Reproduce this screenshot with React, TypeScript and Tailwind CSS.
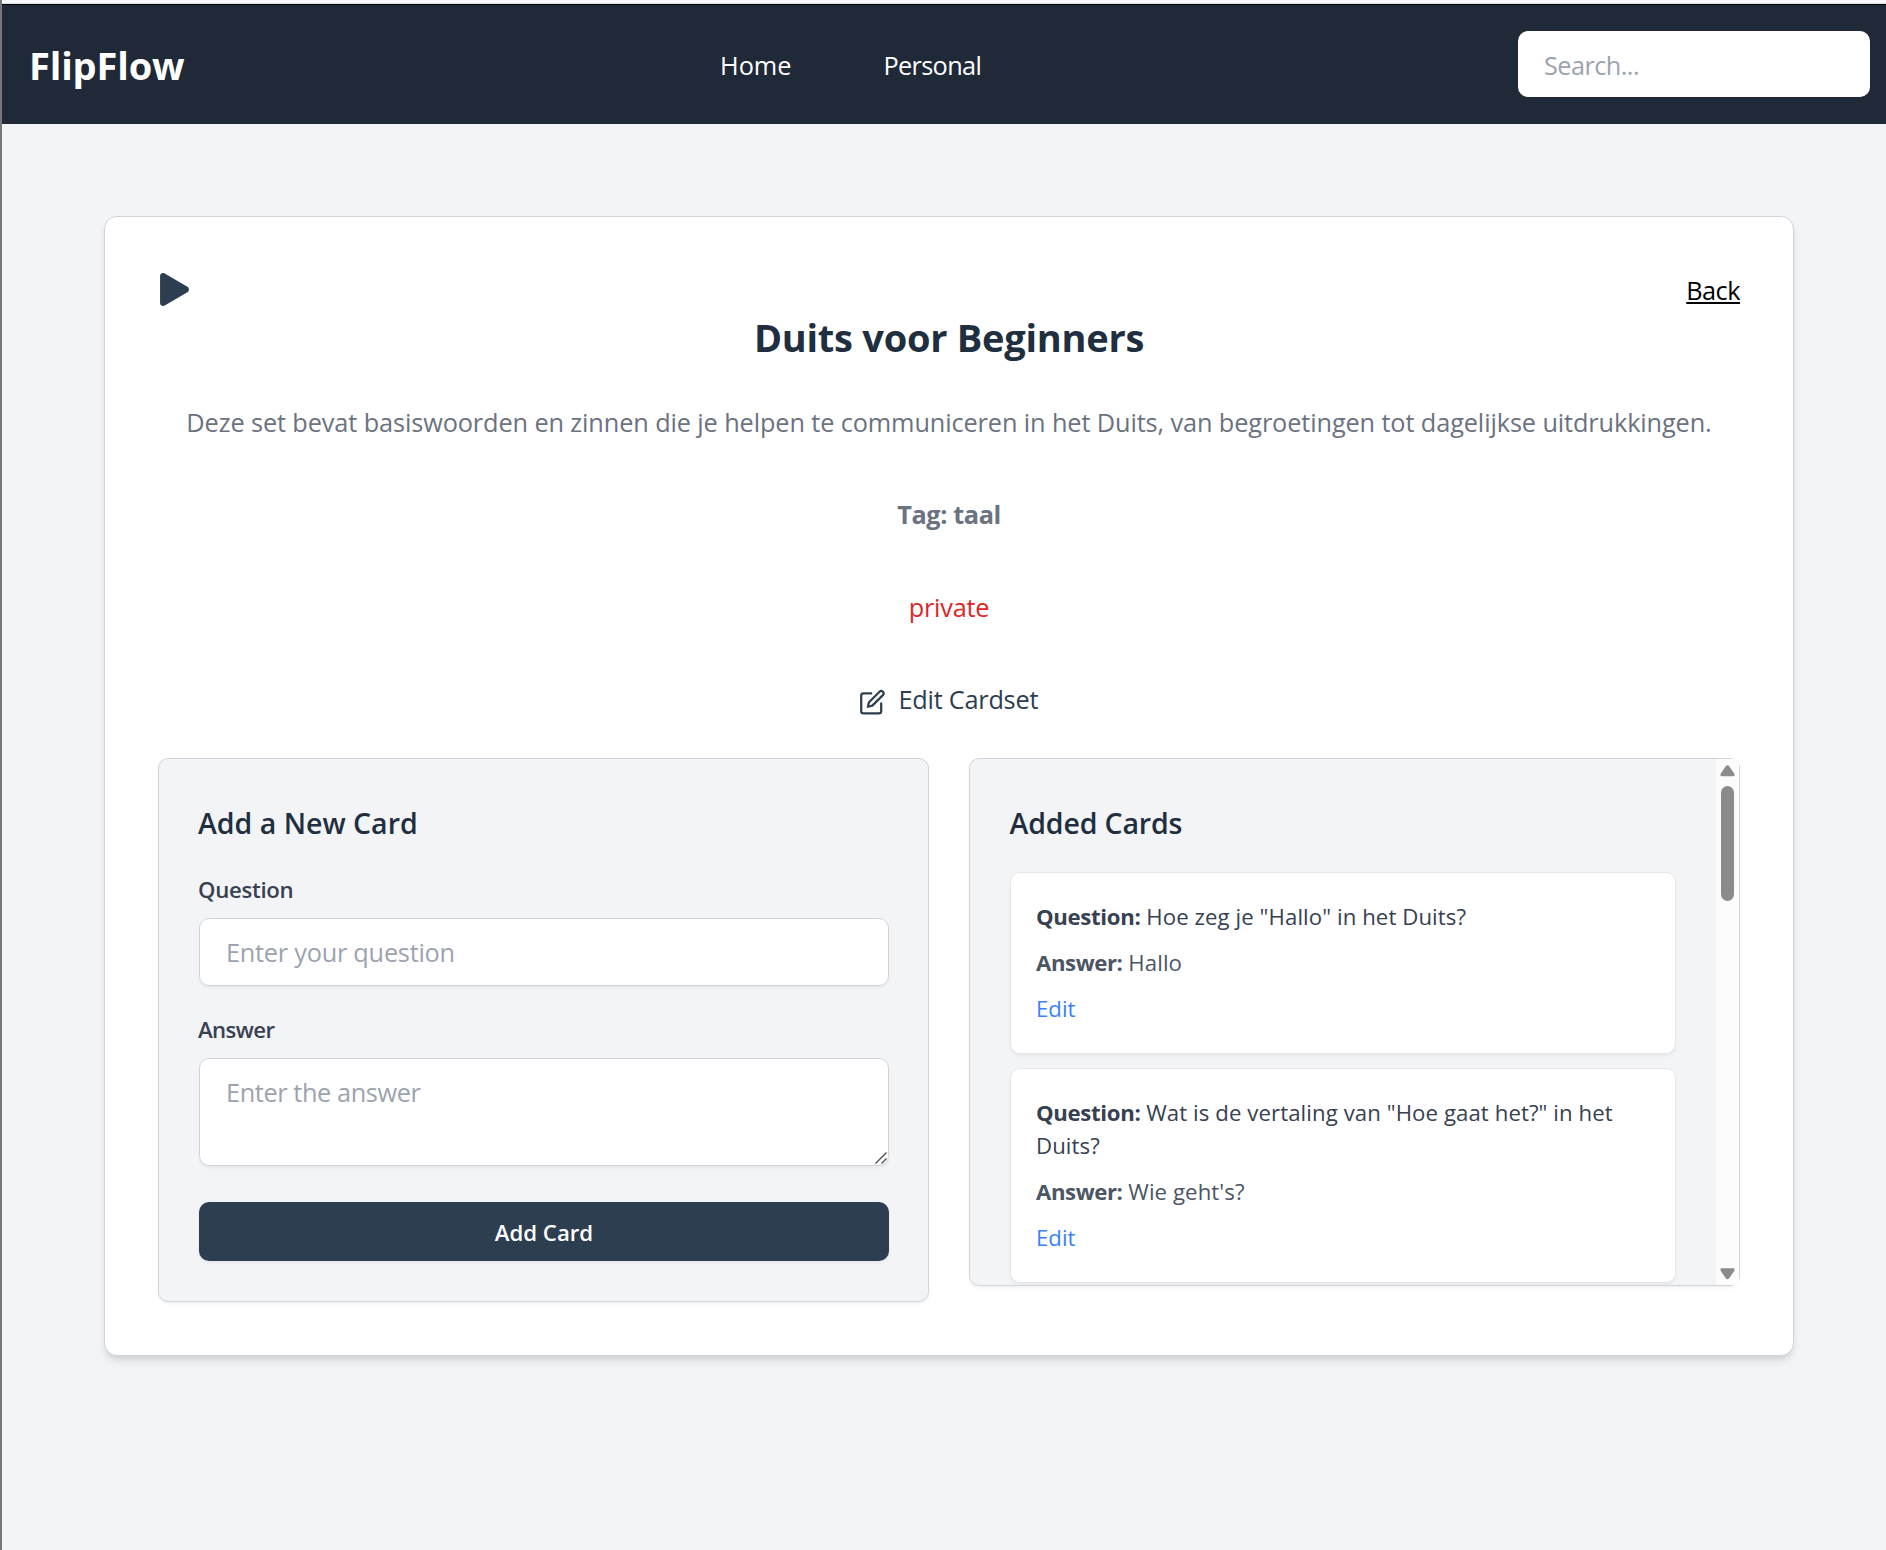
import React from "react";
import { FaPlay } from "react-icons/fa";
import { FiEdit } from "react-icons/fi";

type Card = { question: string; answer: string };

const cards: Card[] = [
  { question: 'Hoe zeg je "Hallo" in het Duits?', answer: "Hallo" },
  { question: 'Wat is de vertaling van "Hoe gaat het?" in het Duits?', answer: "Wie geht's?" },
];

function Header() {
  return (
    <header className="flex h-[119px] items-center bg-[#1f2937] pl-[27px] pr-4 text-white">
      <div className="w-[691px] text-[38px] font-bold leading-[54px] tracking-[-0.004em]">FlipFlow</div>
      <nav className="flex grow gap-[92px] text-[25.3px] leading-10">
        <a>Home</a>
        <a className="tracking-[-0.0266em]">Personal</a>
      </nav>
      <input
        className="mb-px h-[66px] w-[352px] rounded-[10px] bg-white pl-[26px] pt-px text-[25.3px] tracking-[-0.0222em] placeholder:text-[#9ca3af]"
        placeholder="Search..."
      />
    </header>
  );
}

function AddCardForm() {
  return (
    <section className="flex h-[544px] flex-col rounded-[10px] border border-[#d1d5db] bg-[#f3f4f6] py-10 pl-10 pr-[39px] shadow-[0_2px_3px_rgba(0,0,0,0.05)]">
      <h2 className="-ml-px h-12 text-[28.5px] font-semibold leading-[48px] text-[#1f2f40]">Add a New Card</h2>
      <label className="-ml-px mt-[26px] h-[34px] text-[22.2px] font-semibold leading-[34px] tracking-[-0.0131em] text-[#374151]">
        Question
      </label>
      <input
        className="mt-[11px] h-[68px] rounded-[10px] border border-[#d1d5db] bg-white px-[26px] text-[25.3px] tracking-[-0.0095em] shadow-[0_2px_3px_rgba(0,0,0,0.05)] placeholder:text-[#9ca3af]"
        placeholder="Enter your question"
      />
      <label className="-ml-px mt-[27px] h-[34px] text-[22.2px] font-semibold leading-[34px] tracking-[-0.026em] text-[#374151]">
        Answer
      </label>
      <div className="relative mt-[11px] h-[108px]">
        <textarea
          className="block h-full w-full resize-none rounded-[10px] border border-[#d1d5db] bg-white px-[26px] py-[13px] text-[25.3px] leading-10 tracking-[-0.0155em] shadow-[0_2px_3px_rgba(0,0,0,0.05)] placeholder:text-[#9ca3af]"
          placeholder="Enter the answer"
        />
        <svg className="absolute bottom-[2px] right-[2px]" width="12" height="12" viewBox="0 0 12 12" stroke="#4b4b4b" strokeWidth="1.3">
          <path d="M0.5 11.5 11.5 0.5M6.5 11.5 11.5 6.5" />
        </svg>
      </div>
      <button className="mt-9 h-[59px] rounded-[10px] bg-[#2c3e50] pt-[3px] text-[22.2px] font-semibold text-white shadow-[0_2px_3px_rgba(0,0,0,0.05)]">
        Add Card
      </button>
    </section>
  );
}

function CardItem({ question, answer }: Card) {
  return (
    <li className="rounded-[10px] border border-[#e5e7eb] bg-white pb-7 pl-[25.5px] pr-[26px] pt-[27px] text-[22.2px] leading-[33px] shadow-[0_2px_3px_rgba(0,0,0,0.05)]">
      <p className="tracking-[0.0037em] text-[#374151]">
        <strong className="tracking-[-0.015em]">Question:</strong> {question}
      </p>
      <p className="mt-[13px] tracking-[0.0037em] text-[#4b5563]">
        <strong className="tracking-[-0.019em]">Answer:</strong> {answer}
      </p>
      <a className="mt-[13px] block text-[#3b82f6]">Edit</a>
    </li>
  );
}

function ScrollBar() {
  return (
    <div className="flex w-[23px] shrink-0 flex-col items-center bg-[#fcfcfc] pb-[5px] pt-[6px]">
      <svg width="15" height="12" viewBox="0 0 15 12" fill="#8b8b8b">
        <path d="M5.8 1.3Q7.5-.7 9.2 1.3L14.2 8.6Q15.4 11.3 13 11.3H2Q-.4 11.3.8 8.6Z" />
      </svg>
      <div className="mt-[9px] h-[115px] w-[13px] rounded-full bg-[#8b8b8b]" />
      <svg className="mt-auto" width="15" height="12" viewBox="0 0 15 12" fill="#8b8b8b">
        <path d="M5.8 10.2Q7.5 12.2 9.2 10.2L14.2 2.9Q15.4 .2 13 .2H2Q-.4 .2.8 2.9Z" />
      </svg>
    </div>
  );
}

function AddedCards() {
  return (
    <section className="flex h-[528px] rounded-[10px] border border-[#d1d5db] bg-[#f3f4f6] shadow-[0_2px_3px_rgba(0,0,0,0.05)]">
      <div className="grow overflow-hidden pl-[39.5px] pr-10 pt-10">
        <h2 className="h-12 text-[28.5px] font-semibold leading-[48px] tracking-[-0.005em] text-[#1f2f40]">Added Cards</h2>
        <ul className="mt-[25px] flex flex-col gap-[14px]">
          {cards.map((card) => (
            <CardItem key={card.question} {...card} />
          ))}
        </ul>
      </div>
      <ScrollBar />
    </section>
  );
}

export default function App() {
  return (
    <div className="h-[1550px] overflow-hidden border-l-2 border-[#777777] bg-[#f3f4f6] font-['Open_Sans','Noto_Sans',sans-serif]">
      <div className="h-[5px] border-b border-black bg-[#f7f7fc]">
        <div className="h-1 border-b border-[#dedee6]" />
      </div>
      <Header />
      <main className="ml-[102px] mt-[92px] h-[1140px] w-[1690px] rounded-[13px] border border-[#d1d5db] bg-white p-[53px] shadow-[0_7px_10px_-2px_rgba(0,0,0,0.1),0_3px_7px_-3px_rgba(0,0,0,0.1)]">
        <div className="flex h-10 items-start justify-between">
          <FaPlay className="ml-[2px] mt-[3px] h-[33px] w-[29px] text-[#2c3e50]" />
          <a className="text-[25.3px] leading-10 tracking-[-0.0206em] text-black underline decoration-2 underline-offset-[2px]">Back</a>
        </div>
        <div className="flex flex-col items-center text-[25.3px] leading-10 text-[#6b7280]">
          <h1 className="text-[38px] font-bold leading-[54px] tracking-[-0.0069em] text-[#1f2f40]">Duits voor Beginners</h1>
          <p className="mt-[38px] whitespace-nowrap tracking-[-0.0044em]">
            Deze set bevat basiswoorden en zinnen die je helpen te communiceren in het Duits, van begroetingen tot dagelijkse uitdrukkingen.
          </p>
          <p className="mt-[52px] font-bold tracking-[-0.0156em]">Tag: taal</p>
          <p className="mt-[53px] tracking-[-0.0098em] text-[#dc2626]">private</p>
          <a className="mt-[52px] flex gap-[13px] tracking-[-0.0095em] text-[#2c3e50]">
            <FiEdit className="-ml-px mt-[10px] h-[26.67px] w-[26.67px]" />
            Edit Cardset
          </a>
        </div>
        <div className="mt-[39px] grid grid-cols-2 items-start gap-10">
          <AddCardForm />
          <AddedCards />
        </div>
      </main>
    </div>
  );
}
